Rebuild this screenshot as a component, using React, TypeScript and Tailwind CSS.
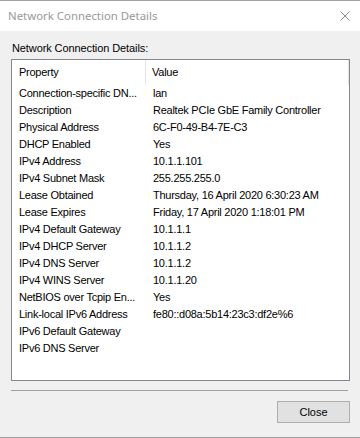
import React from "react";

const rows: [string, string][] = [
  ["Connection-specific DN...", "lan"],
  ["Description", "Realtek PCIe GbE Family Controller"],
  ["Physical Address", "6C-F0-49-B4-7E-C3"],
  ["DHCP Enabled", "Yes"],
  ["IPv4 Address", "10.1.1.101"],
  ["IPv4 Subnet Mask", "255.255.255.0"],
  ["Lease Obtained", "Thursday, 16 April 2020 6:30:23 AM"],
  ["Lease Expires", "Friday, 17 April 2020 1:18:01 PM"],
  ["IPv4 Default Gateway", "10.1.1.1"],
  ["IPv4 DHCP Server", "10.1.1.2"],
  ["IPv4 DNS Server", "10.1.1.2"],
  ["IPv4 WINS Server", "10.1.1.20"],
  ["NetBIOS over Tcpip En...", "Yes"],
  ["Link-local IPv6 Address", "fe80::d08a:5b14:23c3:df2e%6"],
  ["IPv6 Default Gateway", ""],
  ["IPv6 DNS Server", ""],
];

export default function App() {
  return (
    <div
      className="w-[360px] h-[438px] flex flex-col border-t border-b border-[#a0a0a0] bg-[#f0f0f0] text-black"
      style={{ fontFamily: '"Liberation Sans", Arial, sans-serif' }}
    >
      {/* Title bar */}
      <div className="h-[30px] bg-white flex items-center justify-between pl-[8px] pr-[10px]">
        <span
          className="text-[11.4px] text-[#999999] leading-none"
          style={{ fontFamily: '"Noto Sans", sans-serif' }}
        >
          Network Connection Details
        </span>
        <svg width="10" height="10" viewBox="0 0 10 10">
          <path d="M0.5 0.5 L9.5 9.5 M9.5 0.5 L0.5 9.5" stroke="#8a8a8a" strokeWidth="1" fill="none" />
        </svg>
      </div>

      {/* Body */}
      <div className="flex-1 flex flex-col pl-[11px] pr-[10px] pt-[11px]">
        <div className="text-[11px] leading-[13px] pl-px tracking-[-0.1px]">Network Connection Details:</div>
        <div className="mt-[4px] h-[322px] border border-[#828790] bg-white flex flex-col">
          <div className="h-[25px] flex text-[11px] shrink-0 tracking-[-0.25px]">
            <div className="w-[134px] border-r border-[#e5e5e5] flex items-center pl-[7px]">Property</div>
            <div className="flex-1 border-r border-[#e5e5e5] flex items-center pl-[6px]">Value</div>
          </div>
          <div className="flex flex-col">
            {rows.map(([k, v], i) => (
              <div key={i} className="h-[17px] flex items-center text-[11px] whitespace-nowrap tracking-[-0.25px]">
                <div className="w-[134px] pl-[7px] overflow-hidden">{k}</div>
                <div className="pl-[7px]">{v}</div>
              </div>
            ))}
          </div>
        </div>
        <div className="mt-[9px] h-px w-[337px] bg-[#a0a0a0]" />
        <div className="mt-[10px] flex justify-end">
          <button className="w-[73px] h-[22px] border border-[#adadad] bg-[#e1e1e1] text-[11px] flex items-center justify-center">
            Close
          </button>
        </div>
      </div>
    </div>
  );
}
